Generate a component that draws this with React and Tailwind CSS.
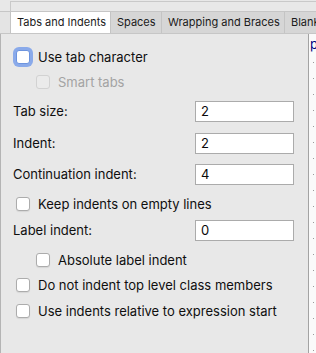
import React from 'react';

const font = { fontFamily: 'Inter, "Liberation Sans", sans-serif' };

function Check({ label, focused = false, disabled = false, indent = false, className = '' }) {
  return (
    <div className={`flex items-center h-[14px] ${indent ? 'pl-[35px]' : 'pl-[15px]'} ${className}`}>
      <span
        className={`box-border w-[14px] h-[14px] rounded-[3px] border ${
          focused
            ? 'border-[#6d94de] bg-white shadow-[0_0_0_3px_#8aaaea]'
            : disabled
              ? 'border-[#d2d2d2] bg-[#ebebeb]'
              : 'border-[#acacac] bg-white shadow-[0_1px_1px_rgba(0,0,0,0.08)]'
        }`}
      />
      <span className={`ml-[8px] text-[13px] leading-none whitespace-nowrap ${disabled ? 'text-[#a3a3a3]' : 'text-[#0f0f0f]'}`}>
        {label}
      </span>
    </div>
  );
}

function Field({ label, value, className = '' }) {
  return (
    <div className={`flex items-center h-[21px] pl-[12px] ${className}`}>
      <span className="w-[182px] text-[13px] text-[#0f0f0f] whitespace-nowrap">{label}</span>
      <div className="box-border w-[99px] h-[21px] border border-[#ababab] bg-white flex items-center pl-[5px] text-[13px] text-[#0a0a0a]">
        {value}
      </div>
    </div>
  );
}

const tabs = [
  { name: 'Tabs and Indents', w: 'w-[100px]', active: true },
  { name: 'Spaces', w: 'w-[51px]' },
  { name: 'Wrapping and Braces', w: 'w-[123px]' },
  { name: 'Blank Lines', w: 'w-[80px]' },
];

export default function App() {
  return (
    <div className="w-[316px] h-[353px] bg-[#e8e8e8] overflow-hidden flex flex-col" style={font}>
      <div className="h-[11px] pl-[10px] pt-[1px] shrink-0">
        <div className="h-full border-t border-l border-[#c9c9c9]" />
      </div>

      <div className="flex h-[23px] shrink-0 pl-[10px] border-t border-b border-[#c6c6c6] bg-[#e4e4e4]">
        {tabs.map((tab) => (
          <div
            key={tab.name}
            className={`${tab.w} shrink-0 flex items-center pl-[6px] border-l border-[#c4c4c4] text-[11px] whitespace-nowrap text-[#1a1a1a] ${
              tab.active ? 'bg-white' : 'bg-[#d6d6d6]'
            }`}
          >
            {tab.name}
          </div>
        ))}
      </div>

      <div className="flex flex-1 min-h-0">
        <div className="flex-1 border-l border-[#b4b4b4] flex flex-col">
          <Check label="Use tab character" focused className="mt-[16px]" />
          <Check label="Smart tabs" disabled indent className="mt-[11px]" />
          <Field label="Tab size:" value="2" className="mt-[12px]" />
          <Field label="Indent:" value="2" className="mt-[11px]" />
          <Field label="Continuation indent:" value="4" className="mt-[10px]" />
          <Check label="Keep indents on empty lines" className="mt-[12px]" />
          <Field label="Label indent:" value="0" className="mt-[9px]" />
          <Check label="Absolute label indent" indent className="mt-[12px]" />
          <Check label="Do not indent top level class members" className="mt-[11px]" />
          <Check label="Use indents relative to expression start" className="mt-[12px]" />
        </div>

        <div className="w-[8px] shrink-0 border-l border-[#a3a3a3] bg-[#fafafa] overflow-hidden flex flex-col">
          <span className="pl-[1px] pt-[3px] text-[13px] leading-[14px] text-[#000080]">p</span>
          <div className="flex flex-col gap-[15px] pt-[11px] pl-[4px]">
            {Array.from({ length: 19 }).map((_, i) => (
              <span key={i} className="block w-[1px] h-[1px] bg-[#9a9a9a]" />
            ))}
          </div>
        </div>
      </div>
    </div>
  );
}
